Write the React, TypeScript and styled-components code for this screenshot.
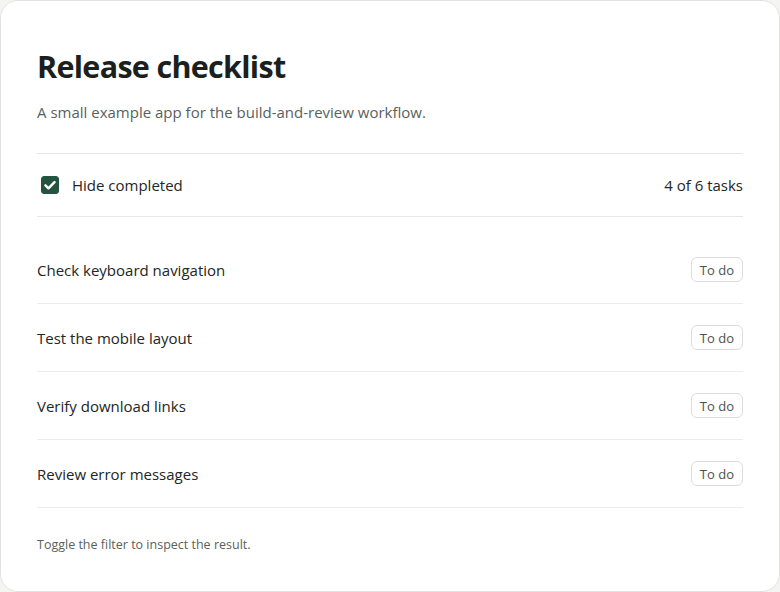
import React, { useState } from 'react';
import styled, { createGlobalStyle } from 'styled-components';

const GlobalStyle = createGlobalStyle`
  html, body {
    margin: 0;
    padding: 0;
    background: #f4f4f2;
  }
  body {
    font-family: 'Open Sans', 'Noto Sans', sans-serif;
    color: #1f2321;
  }
`;

type Task = {
  id: number;
  title: string;
  done: boolean;
};

const TASKS: Task[] = [
  { id: 1, title: 'Write release notes', done: true },
  { id: 2, title: 'Check keyboard navigation', done: false },
  { id: 3, title: 'Test the mobile layout', done: false },
  { id: 4, title: 'Bump version number', done: true },
  { id: 5, title: 'Verify download links', done: false },
  { id: 6, title: 'Review error messages', done: false },
];

export default function App() {
  const [hideCompleted, setHideCompleted] = useState(true);

  const visible = hideCompleted ? TASKS.filter((t) => !t.done) : TASKS;

  return (
    <>
      <GlobalStyle />
      <Card>
        <Title>Release checklist</Title>
        <Subtitle>A small example app for the build-and-review workflow.</Subtitle>

        <FilterBar>
          <FilterLabel>
            <HiddenInput
              type="checkbox"
              checked={hideCompleted}
              onChange={(e) => setHideCompleted(e.target.checked)}
            />
            <Box checked={hideCompleted}>
              {hideCompleted && (
                <svg width="14" height="14" viewBox="0 0 16 16" fill="none">
                  <path d="M2.8 8.4l3.4 3.4L13.2 4.6" stroke="#fff" strokeWidth="2.8" strokeLinecap="round" strokeLinejoin="round" />
                </svg>
              )}
            </Box>
            Hide completed
          </FilterLabel>
          <Count>
            {visible.length} of {TASKS.length} tasks
          </Count>
        </FilterBar>

        <TaskList>
          {visible.map((task) => (
            <TaskRow key={task.id}>
              <TaskTitle>{task.title}</TaskTitle>
              <Status done={task.done}>{task.done ? 'Done' : 'To do'}</Status>
            </TaskRow>
          ))}
        </TaskList>

        <Footer>Toggle the filter to inspect the result.</Footer>
      </Card>
    </>
  );
}

// ------------------------------------------------------------------------------------------------

const Card = styled.main`
  box-sizing: border-box;
  width: 780px;
  height: 592px;
  background: #ffffff;
  border: 1px solid #e2e2df;
  border-radius: 18px;
  padding: 44px 36px 0 36px;
  display: flex;
  flex-direction: column;
`;

const Title = styled.h1`
  margin: 0;
  font-size: 30.5px;
  line-height: 42px;
  font-weight: 700;
  letter-spacing: -0.7px;
  color: #1b1f1d;
`;

const Subtitle = styled.p`
  margin: 14px 0 0 0;
  font-size: 15px;
  line-height: 22px;
  color: #5a5f5c;
`;

const FilterBar = styled.div`
  margin-top: 30px;
  height: 62px;
  border-top: 1px solid #e6e6e3;
  border-bottom: 1px solid #e6e6e3;
  display: flex;
  align-items: center;
  justify-content: space-between;
`;

const FilterLabel = styled.label`
  display: flex;
  align-items: center;
  gap: 13px;
  padding-left: 4px;
  font-size: 15px;
  color: #222624;
  cursor: pointer;
`;

const HiddenInput = styled.input`
  position: absolute;
  opacity: 0;
  width: 0;
  height: 0;
`;

const Box = styled.span<{ checked: boolean }>`
  box-sizing: border-box;
  width: 18px;
  height: 18px;
  border-radius: 3px;
  display: flex;
  align-items: center;
  justify-content: center;
  background: ${({ checked }) => (checked ? '#24543f' : '#ffffff')};
  border: 1px solid ${({ checked }) => (checked ? '#24543f' : '#9aa09c')};
`;

const Count = styled.span`
  font-size: 15px;
  color: #222624;
`;

const TaskList = styled.ul`
  list-style: none;
  margin: 19px 0 0 0;
  padding: 0;
`;

const TaskRow = styled.li`
  height: 67px;
  border-bottom: 1px solid #ececea;
  display: flex;
  align-items: center;
  justify-content: space-between;
`;

const TaskTitle = styled.span`
  font-size: 15px;
  color: #222624;
`;

const Status = styled.span<{ done: boolean }>`
  box-sizing: border-box;
  height: 25px;
  padding: 0 8px;
  display: inline-flex;
  align-items: center;
  border: 1px solid #dcdcd9;
  border-radius: 6px;
  font-size: 13px;
  color: ${({ done }) => (done ? '#24543f' : '#4d524f')};
  background: #ffffff;
`;

const Footer = styled.p`
  margin: 28px 0 0 0;
  font-size: 12.5px;
  line-height: 18px;
  color: #5a5f5c;
`;
